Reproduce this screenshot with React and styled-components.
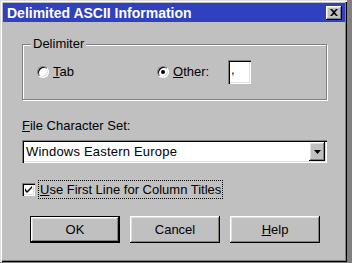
import React from "react";
import styled, { createGlobalStyle } from "styled-components";

const GlobalStyle = createGlobalStyle`
  html, body {
    margin: 0;
    padding: 0;
    background: #808080;
  }
  body {
    font-family: "Liberation Sans", Arial, sans-serif;
    font-size: 13px;
    color: #000;
  }
`;

const raised = `
  box-shadow: inset -1px -1px 0 #000, inset 1px 1px 0 #fff,
    inset -2px -2px 0 #808080, inset 2px 2px 0 #dfdfdf;
`;

const sunken = `
  box-shadow: inset 1px 1px 0 #808080, inset 2px 2px 0 #000,
    inset -1px -1px 0 #fff, inset -2px -2px 0 #dfdfdf;
`;

const Screen = styled.div`
  width: 352px;
  height: 263px;
  overflow: hidden;
  background: #808080;
`;

const Window = styled.div`
  width: 347px;
  height: 262px;
  box-sizing: border-box;
  padding: 3px 2px 0 3px;
  background: #c0c0c0;
  box-shadow: inset 1px 1px 0 #dfdfdf, inset 2px 2px 0 #fff,
    inset -1px -1px 0 #000, inset -2px -2px 0 #808080;
  display: flex;
  flex-direction: column;
`;

const TitleBar = styled.div`
  height: 19px;
  background: #3041c0;
  display: flex;
  align-items: center;
  justify-content: space-between;
  padding: 0 3px 0 4px;
  color: #fff;
  font-weight: bold;
  font-size: 14px;
`;

const CloseBtn = styled.div`
  width: 16px;
  height: 14px;
  background: #c0c0c0;
  ${raised}
  display: flex;
  align-items: center;
  justify-content: center;
`;

const Client = styled.div`
  display: flex;
  flex-direction: column;
  align-items: flex-start;
  padding: 0 18px 0 19px;
`;

const GroupBox = styled.div`
  position: relative;
  margin-top: 22px;
  width: 100%;
  height: 56px;
  box-sizing: border-box;
  border: 1px solid #808080;
  box-shadow: 1px 1px 0 #fff, inset 1px 1px 0 #fff;
  padding: 15px 0 0 14px;
`;

const Legend = styled.span`
  position: absolute;
  top: -9px;
  left: 8px;
  padding: 0 2px;
  line-height: 16px;
  background: #c0c0c0;
`;

const GroupRow = styled.div`
  display: flex;
  align-items: center;
  height: 24px;
`;

const RadioItem = styled.label`
  display: flex;
  align-items: center;
  gap: 4px;
  width: ${(p) => p.$width}px;
  line-height: 16px;
`;

const RadioCircle = styled.span`
  position: relative;
  width: 12px;
  height: 12px;
  box-sizing: border-box;
  border-radius: 50%;
  background: #fff;
  border: 1px solid;
  border-color: #808080 #fff #fff #808080;
  box-shadow: inset 1px 1px 0 #000, inset -1px -1px 0 #dfdfdf;
  display: flex;
  align-items: center;
  justify-content: center;

  &::after {
    content: "";
    display: ${(p) => (p.$checked ? "block" : "none")};
    width: 4px;
    height: 4px;
    border-radius: 50%;
    background: #000;
  }
`;

const EditBox = styled.div`
  width: 23px;
  height: 24px;
  box-sizing: border-box;
  background: #fff;
  ${sunken}
  padding: 2px 0 0 3px;
  line-height: 16px;
`;

const FieldLabel = styled.div`
  margin-top: 18px;
  line-height: 16px;
`;

const Combo = styled.div`
  margin-top: 6px;
  width: 100%;
  height: 23px;
  box-sizing: border-box;
  background: #fff;
  ${sunken}
  padding: 2px 2px 2px 4px;
  display: flex;
  align-items: center;
  justify-content: space-between;
  letter-spacing: 0.2px;
`;

const DropBtn = styled.div`
  width: 16px;
  height: 19px;
  background: #c0c0c0;
  ${raised}
  display: flex;
  align-items: center;
  justify-content: center;
`;

const CheckRow = styled.div`
  margin-top: 17px;
  height: 19px;
  display: flex;
  align-items: center;
  gap: 3px;
`;

const CheckBox = styled.span`
  width: 13px;
  height: 13px;
  box-sizing: border-box;
  background: #fff;
  ${sunken}
  display: flex;
  align-items: center;
  justify-content: center;
`;

const FocusLabel = styled.span`
  height: 19px;
  box-sizing: border-box;
  border: 1px dotted #000;
  padding: 0 1px;
  line-height: 17px;
`;

const ButtonRow = styled.div`
  margin-top: 17px;
  padding-left: 8px;
  display: flex;
  gap: 10px;
`;

const Button = styled.div`
  width: 90px;
  height: 27px;
  box-sizing: border-box;
  background: #c0c0c0;
  display: flex;
  align-items: center;
  justify-content: center;
  ${raised}
  ${(p) =>
    p.$default &&
    `
    border: 1px solid #000;
  `}
`;

const App = () => (
  <>
    <GlobalStyle />
    <Screen>
      <Window>
        <TitleBar>
          <span>Delimited ASCII Information</span>
          <CloseBtn>
            <svg width="8" height="7" viewBox="0 0 8 7">
              <path d="M0 0h2l2 2 2-2h2L5 3.5 8 7H6L4 5 2 7H0l3-3.5z" fill="#000" />
            </svg>
          </CloseBtn>
        </TitleBar>
        <Client>
          <GroupBox>
            <Legend>Delimiter</Legend>
            <GroupRow>
              <RadioItem $width={120}>
                <RadioCircle />
                <span>
                  <u>T</u>ab
                </span>
              </RadioItem>
              <RadioItem $width={71}>
                <RadioCircle $checked />
                <span>
                  <u>O</u>ther:
                </span>
              </RadioItem>
              <EditBox>,</EditBox>
            </GroupRow>
          </GroupBox>
          <FieldLabel>
            <u>F</u>ile Character Set:
          </FieldLabel>
          <Combo>
            <span>Windows Eastern Europe</span>
            <DropBtn>
              <svg width="7" height="4" viewBox="0 0 7 4">
                <path d="M0 0h7L3.5 4z" fill="#000" />
              </svg>
            </DropBtn>
          </Combo>
          <CheckRow>
            <CheckBox>
              <svg width="7" height="7" viewBox="0 0 7 7">
                <path d="M0 2v3l2 2 5-5V0L2 5z" fill="#000" />
              </svg>
            </CheckBox>
            <FocusLabel>
              <u>U</u>se First Line for Column Titles
            </FocusLabel>
          </CheckRow>
          <ButtonRow>
            <Button $default>OK</Button>
            <Button>Cancel</Button>
            <Button>
              <span>
                <u>H</u>elp
              </span>
            </Button>
          </ButtonRow>
        </Client>
      </Window>
    </Screen>
  </>
);

export default App;
